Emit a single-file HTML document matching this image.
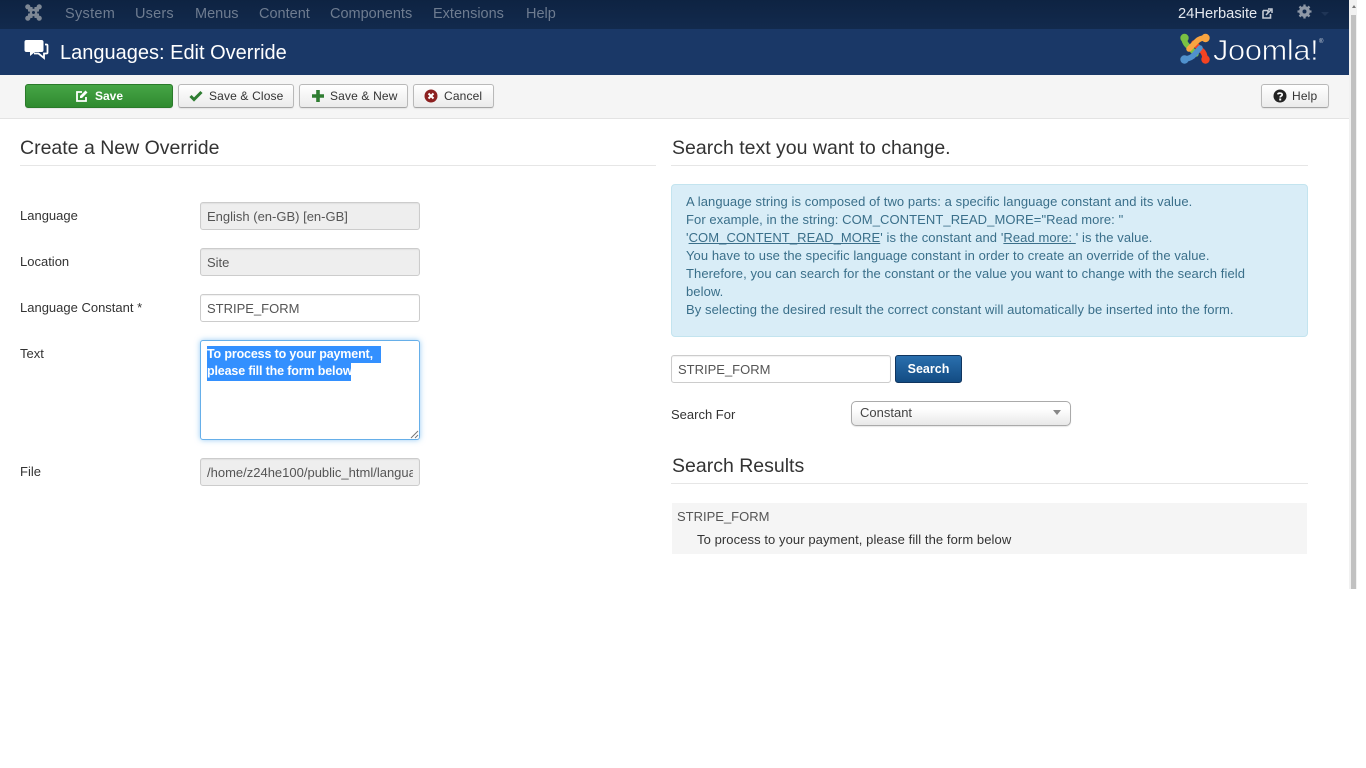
<!DOCTYPE html>
<html lang="en"><head><meta charset="utf-8"><title>Languages: Edit Override</title>
<style>
*{box-sizing:border-box}
html,body{margin:0;padding:0;width:1366px;height:768px;overflow:hidden;background:#fff}
body{font-family:"Liberation Sans",sans-serif;font-size:13px;color:#333;position:relative}
.a{position:absolute;white-space:nowrap}
#nav{left:0;top:0;width:1349px;height:29px;background:linear-gradient(#0e2342,#122a4d);}
.m{top:5px;font-size:14.5px;line-height:18px;color:#6e7c90}
#hd{left:0;top:29px;width:1349px;height:46px;background:#1a3867}
#tb{left:0;top:75px;width:1349px;height:44px;background:#f5f5f5;border-bottom:1px solid #e3e3e3}
.b{height:24px;top:84px;border:1px solid #b9b9b9;border-bottom-color:#a5a5a5;border-radius:3px;background:linear-gradient(#fff,#ebebeb);font-size:12px;line-height:22px;color:#333;letter-spacing:.15px;box-shadow:0 1px 1px rgba(0,0,0,.07)}
.b svg{position:absolute;top:4px}
.b span{position:absolute;top:0}
h3{position:absolute;margin:0;font-weight:400;font-size:19.5px;line-height:24px;color:#333;white-space:nowrap}
.hr{position:absolute;height:1px;background:#e6e6e6}
.l{position:absolute;font-size:13px;line-height:16px;color:#333;white-space:nowrap}
.i{position:absolute;left:200px;width:220px;height:28px;border:1px solid #ccc;border-radius:3px;font-size:13px;line-height:28px;padding-left:6px;color:#555;overflow:hidden;white-space:nowrap;box-shadow:inset 0 1px 1px rgba(0,0,0,.06)}
.d{background:#eee}
.sel{background:#3390ff;color:#fff}
#info{left:671px;top:184px;width:637px;height:153px;background:#d9edf7;border:1px solid #c3e4ef;border-radius:4px;color:#3a6f8a;font-size:13px;letter-spacing:.08px;line-height:18px;padding:8px 14px}
#info div{white-space:nowrap}
</style></head><body>
<div class="a" id="nav"></div>
<svg class="a" style="left:25px;top:4px" width="17" height="17" viewBox="0 0 17 17"><rect x="3" y="3" width="11" height="11" rx="1" fill="#7d8794"/><g fill="#7d8794"><circle cx="2.800" cy="2.800" r="2.600"/><circle cx="14.200" cy="2.800" r="2.600"/><circle cx="2.800" cy="14.200" r="2.600"/><circle cx="14.200" cy="14.200" r="2.600"/></g><g fill="#142a4a"><path d="M8.500 2.500 10 4 8.500 5 7 4zM8.500 14.500 10 13 8.500 12 7 13zM2.500 8.500 4 7 5 8.500 4 10zM14.500 8.500 13 7 12 8.500 13 10z"/><circle cx="8.500" cy="8.500" r="1.500"/></g></svg>
<div class="a m" style="left:65px;letter-spacing:.3px">System</div>
<div class="a m" style="left:135px;letter-spacing:.2px">Users</div>
<div class="a m" style="left:195px">Menus</div>
<div class="a m" style="left:259px">Content</div>
<div class="a m" style="left:330px">Components</div>
<div class="a m" style="left:433px">Extensions</div>
<div class="a m" style="left:526px">Help</div>
<div class="a m" style="left:1178px;color:#e4e8ee;font-size:14.700px">24Herbasite</div>
<svg class="a" style="left:1262px;top:8px" width="11" height="11" viewBox="0 0 11 11"><path d="M1 2.500h5v2M8.500 6v4H1V2.500" fill="none" stroke="#c4cad4" stroke-width="1.600"/><path d="M4 7 9 2M6 1h4v4" fill="none" stroke="#c4cad4" stroke-width="1.500"/></svg>
<svg class="a" style="left:1297px;top:4px" width="15" height="15" viewBox="0 0 15 15"><circle cx="7.500" cy="7.500" r="3.900" fill="none" stroke="#8e98a6" stroke-width="3"/><path d="M7.500 .5v14M.5 7.500h14M2.500 2.500l10 10M12.500 2.500l-10 10" stroke="#8e98a6" stroke-width="2.300"/><circle cx="7.500" cy="7.500" r="2" fill="#122a4d"/></svg>
<div class="a" style="left:1321px;top:12px;width:0;height:0;border:4px solid transparent;border-top-color:#1f3556"></div>

<div class="a" id="hd"></div>
<svg class="a" style="left:24px;top:40px" width="25" height="20" viewBox="0 0 25 20"><path d="M2.500 0h15a2 2 0 0 1 2 2v8a2 2 0 0 1-2 2H11l-5 4v-4H2.500a2 2 0 0 1-2-2V2a2 2 0 0 1 2-2z" fill="#fff"/><path d="M21 4.500h1.500a1 1 0 0 1 1 1v7a1 1 0 0 1-1 1H20v4.500l-5.500-4.500H10" fill="none" stroke="#fff" stroke-width="1.800"/></svg>
<div class="a" style="left:60px;top:40px;font-size:20px;line-height:26px;color:#fff">Languages: Edit Override</div>
<svg class="a" style="left:1180px;top:33px" width="30" height="31" viewBox="0 0 30 31"><g fill="none" stroke-width="5.500" stroke-linecap="round"><path d="M25 26Q25 20 21 17L14 10" stroke="#f44321"/><path d="M4 6Q5 11 9 14L16 21" stroke="#7ac143"/><path d="M4 26Q9 26 13 23L20 15" stroke="#5091cd"/><path d="M25 5Q20 5 17 8L9 16" stroke="#f9a541"/></g><circle cx="4.500" cy="5" r="4.200" fill="#7ac143"/><circle cx="25.500" cy="5" r="4.200" fill="#f9a541"/><circle cx="25.500" cy="26.500" r="4.200" fill="#f44321"/><circle cx="4.500" cy="26.500" r="4.200" fill="#5091cd"/></svg>
<div class="a" style="left:1213px;top:35px;font-size:29px;line-height:32px;color:#fff;font-weight:400;letter-spacing:-.3px;transform-origin:0 0;transform:scaleX(1.06);-webkit-text-stroke:.7px #1a3867">Joomla!</div>
<div class="a" style="left:1319px;top:39px;font-size:6px;line-height:7px;color:#cfd6e0">®</div>

<div class="a" id="tb"></div>
<div class="a b" style="left:25px;width:148px;background:linear-gradient(#46a546,#2f8a2f);border-color:#2a7a2a;color:#fff;font-weight:700;letter-spacing:0">
<svg style="left:49px" width="14" height="14" viewBox="0 0 14 14"><path d="M11 8v4H2V3h5" fill="none" stroke="#fff" stroke-width="1.800"/><path d="M5 7 10.500 1.500l2 2L7 9H5z" fill="#fff"/></svg><span style="left:69px">Save</span></div>
<div class="a b" style="left:178px;width:116px">
<svg style="left:10px;top:5px" width="14" height="12" viewBox="0 0 14 12"><path d="M1.500 6 5 9.500 12.500 2" fill="none" stroke="#2f7d32" stroke-width="3"/></svg><span style="left:30px">Save &amp; Close</span></div>
<div class="a b" style="left:299px;width:109px">
<svg style="left:11px;top:4px" width="14" height="14" viewBox="0 0 14 14"><path d="M7 1v12M1 7h12" stroke="#2f7d32" stroke-width="3.600"/></svg><span style="left:30px">Save &amp; New</span></div>
<div class="a b" style="left:413px;width:81px">
<svg style="left:10px;top:4px" width="14" height="14" viewBox="0 0 14 14"><circle cx="7" cy="7" r="6.500" fill="#8c2020"/><path d="M4.500 4.500l5 5M9.500 4.500l-5 5" stroke="#fff" stroke-width="2"/></svg><span style="left:30px">Cancel</span></div>
<div class="a b" style="left:1261px;width:68px">
<svg style="left:11px;top:4px" width="14" height="14" viewBox="0 0 14 14"><circle cx="7" cy="7" r="6.500" fill="#222"/><path d="M4.800 5.400C5 3.800 9.200 3.600 9.200 5.700 9.200 7 7.200 7 7.200 8.500" fill="none" stroke="#fff" stroke-width="1.700"/><rect x="6.200" y="9.500" width="2" height="2" fill="#fff"/></svg><span style="left:30px">Help</span></div>

<h3 style="left:20px;top:136px">Create a New Override</h3>
<div class="hr" style="left:20px;top:165px;width:636px"></div>
<div class="l" style="left:20px;top:208px">Language</div>
<div class="i d" style="top:202px">English (en-GB) [en-GB]</div>
<div class="l" style="left:20px;top:254px">Location</div>
<div class="i d" style="top:248px">Site</div>
<div class="l" style="left:20px;top:300px">Language Constant *</div>
<div class="i" style="top:294px">STRIPE_FORM</div>
<div class="l" style="left:20px;top:346px">Text</div>
<div class="a" style="left:200px;top:340px;width:220px;height:100px;border:1px solid #66afe9;border-radius:3px;box-shadow:0 0 6px rgba(82,168,236,.6);background:#fff"></div>
<div class="a sel" style="left:207px;top:346px;width:174px;height:17px;font-size:12.500px;line-height:16px;font-weight:700;letter-spacing:-.15px;overflow:hidden">To process to your payment,</div>
<div class="a sel" style="left:207px;top:363px;width:144px;height:18px;font-size:12.500px;line-height:17px;font-weight:700;letter-spacing:-.15px;overflow:hidden">please fill the form below</div>
<svg class="a" style="left:410px;top:430px" width="9" height="9" viewBox="0 0 9 9"><path d="M1 8 8 1M5 8 8 5" stroke="#777" stroke-width="1"/></svg>
<div class="l" style="left:20px;top:464px">File</div>
<div class="i d" style="top:458px"><div style="width:206px;overflow:hidden">/home/z24he100/public_html/language/overrides</div></div>

<h3 style="left:672px;top:136px">Search text you want to change.</h3>
<div class="hr" style="left:671px;top:165px;width:637px"></div>
<div class="a" id="info">
<div>A language string is composed of two parts: a specific language constant and its value.</div>
<div>For example, in the string: COM_CONTENT_READ_MORE="Read more: "</div>
<div>'<u>COM_CONTENT_READ_MORE</u>' is the constant and '<u>Read more: </u>' is the value.</div>
<div>You have to use the specific language constant in order to create an override of the value.</div>
<div>Therefore, you can search for the constant or the value you want to change with the search field</div>
<div>below.</div>
<div>By selecting the desired result the correct constant will automatically be inserted into the form.</div>
</div>
<div class="i" style="left:671px;top:355px">STRIPE_FORM</div>
<div class="a" style="left:895px;top:355px;width:67px;height:28px;border:1px solid #10355f;border-radius:3px;background:linear-gradient(#2a6fae,#134c83);color:#fff;font-weight:700;font-size:12.500px;line-height:26px;text-align:center">Search</div>
<div class="l" style="left:671px;top:407px">Search For</div>
<div class="a" style="left:851px;top:401px;width:220px;height:25px;border:1px solid #aaa;border-radius:5px;background:linear-gradient(#fff 30%,#e8e8e8);font-size:13px;line-height:22px;padding-left:8px;color:#444;box-shadow:0 1px 1px rgba(0,0,0,.1)">Constant</div>
<div class="a" style="left:1053px;top:410px;width:0;height:0;border-left:4px solid transparent;border-right:4px solid transparent;border-top:5px solid #888"></div>
<h3 style="left:672px;top:454px">Search Results</h3>
<div class="hr" style="left:671px;top:483px;width:637px"></div>
<div class="a" style="left:672px;top:503px;width:635px;height:51px;background:#f5f5f5"></div>
<div class="a" style="left:677px;top:509px;font-size:13px;line-height:16px;color:#555">STRIPE_FORM</div>
<div class="a" style="left:697px;top:532px;font-size:13px;letter-spacing:.08px;line-height:16px;color:#333">To process to your payment, please fill the form below</div>

<div class="a" style="left:1349px;top:0;width:8px;height:589px;background:#f1f1f1"></div>
<div class="a" style="left:1351px;top:15px;width:5px;height:574px;background:#c1c1c1"></div>
<div class="a" style="left:1352px;top:5px;width:0;height:0;border-left:2px solid transparent;border-right:2px solid transparent;border-bottom:3px solid #777"></div>
</body></html>
